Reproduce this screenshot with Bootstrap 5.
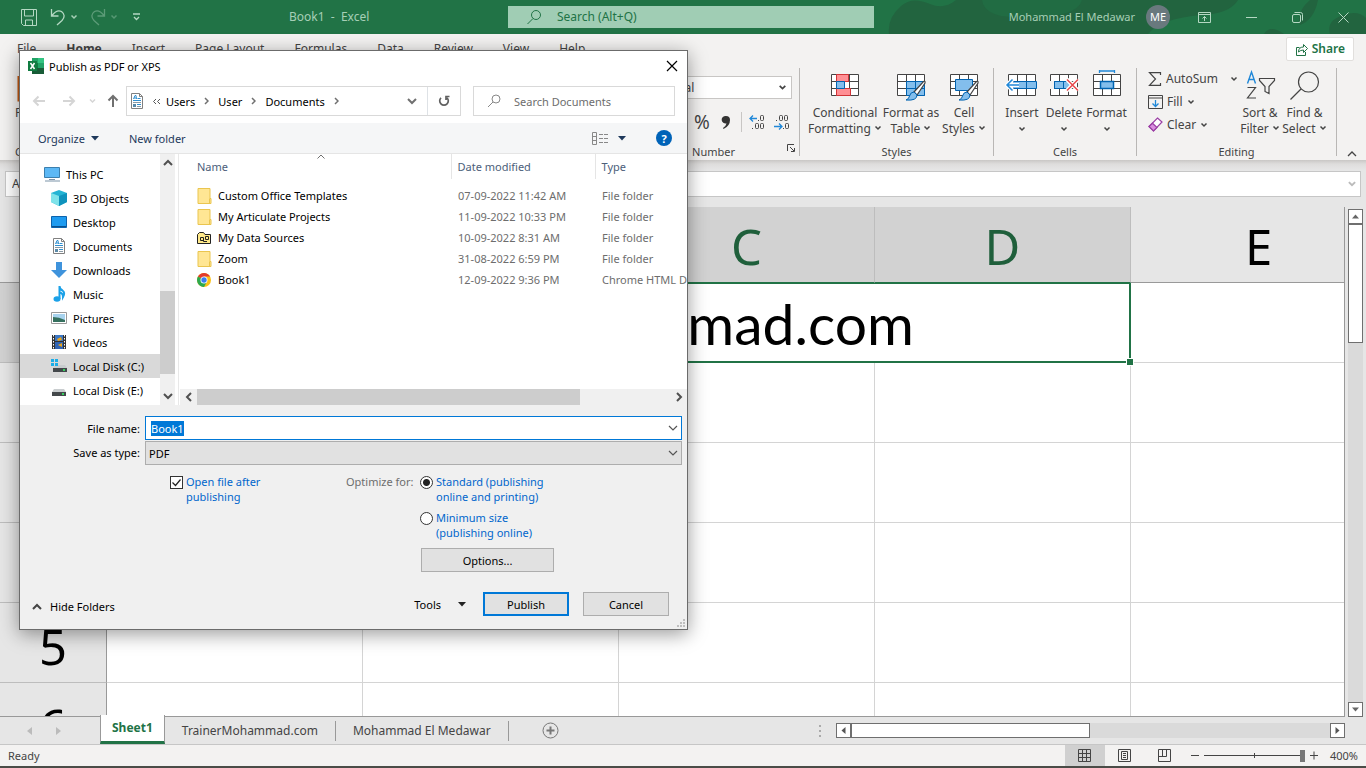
<!DOCTYPE html>
<html lang="en">
<head>
<meta charset="utf-8">
<meta name="viewport" content="width=device-width, initial-scale=1">
<title>Book1 - Excel</title>
<link href="https://cdn.jsdelivr.net/npm/bootstrap@5.3.0/dist/css/bootstrap.min.css" rel="stylesheet">
<style>
:root { --xl: #217346; --ink: #444; --line: #d4d4d4; }
body { font-family: "Noto Sans", "Open Sans", sans-serif; font-size: 12px; line-height: 16px; color: var(--ink); background: #e6e6e6; overflow: hidden; }
svg { display: block; flex: none; fill: none; }
button { background: none; border: 0; padding: 0; color: inherit; font: inherit; }
input, select { font: inherit; color: inherit; }
a { color: inherit; text-decoration: none; }
.chev { display: inline-block; vertical-align: 1px; stroke: currentColor; stroke-width: 1.5; }

/* title bar */
.titlebar { height: 34px; background: var(--xl); color: #a6cfb6; }
.titlebar .deco { right: 0; top: 0; }
.qat { width: 289px; padding-left: 20px; }
.tell { width: 366px; height: 22px; background: #a0cdb4; color: #217346; }
.tell input { background: none; border: 0; outline: 0; padding: 0; width: 240px; }
.tell input::placeholder, .seek input::placeholder { color: inherit; opacity: 1; }
.who { font-size: 11px; }
.face { width: 24px; height: 24px; background: #69797e; color: #fff; font-size: 11px; }

/* ribbon */
.ribbon { background: #f3f2f1; }
.tabrow { height: 32px; padding: 0 12px 0 17px; }
.tabrow nav { gap: 30px; padding-top: 7px; }
.share { height: 24px; background: #fff; border: 1px solid #e1dfdd; border-radius: 2px; color: var(--xl); font-weight: 600; padding: 0 8px; }
.groups { height: 94px; }
.group { border-right: 1px solid #b9b7b5; margin: 2px 0 4px; position: relative; }
.group-name { text-align: center; font-size: 11px; }
.tools { height: 72px; padding-top: 2px; }
.big { display: flex; flex-direction: column; align-items: center; line-height: 16px; white-space: nowrap; }
.big svg.pic { height: 35px; width: 34px; }
.small-tool { height: 23px; gap: 4px; }
.numfmt { height: 23px; background: #fff; border: 1px solid #c8c6c4; width: 146px; padding: 0 4px 0 3px; margin: 6px 0 0 18px; }
.numfmt select, .typebox select { appearance: none; background: none; border: 0; outline: 0; padding: 0; flex: 1; }
.formula { height: 47px; padding: 11px 5px; background: linear-gradient(#c9c7c5, #dedddc 4px, #e6e6e6 10px); }
.fbox { height: 26px; border: 1px solid #c6c6c6; background: #fff; display: flex; align-items: center; }
.fbox input { border: 0; outline: 0; background: none; width: 100%; padding: 0 6px; }

/* worksheet */
.sheet { min-height: 0; }
.cells { overflow: hidden; border-right: 1px solid #999; border-bottom: 1px solid #999; }
.cells table { table-layout: fixed; border-collapse: separate; border-spacing: 0; width: 1387px; background: #fff; color: #000; }
.cells th { font-size: 49px; font-weight: 400; line-height: 64px; text-align: center; background: #e6e6e6; border-right: 1px solid #999; border-bottom: 1px solid #bdbdbd; padding: 6px 0 0; }
.cells thead th { height: 76px; border-right-color: #bdbdbd; border-bottom-color: #999; padding: 2px 0 0; }
.cells th.on { background: #d2d2d2; color: #1f5f3b; }
.cells thead th.on { border-bottom-color: var(--xl); }
.cells tbody tr { height: 80px; }
.cells td { border-right: 1px solid var(--line); border-bottom: 1px solid var(--line); padding: 0; }
.cells td.picked { border: 2px solid var(--xl); border-top-width: 1px; position: relative; font-family: Lato, sans-serif; font-size: 57px; line-height: 76px; text-align: center; }
.picked i { position: absolute; right: -5px; bottom: -5px; width: 6px; height: 6px; background: var(--xl); border: 1px solid #fff; box-sizing: content-box; }
.vbar { width: 21px; padding: 2px 3px 0; }
.sb { border: 1px solid #6f6f6f; background: #fff; width: 15px; height: 15px; display: flex; align-items: center; justify-content: center; }
.track { background: #dadada; }
.sheettabs { height: 28px; border-bottom: 1px solid #c6c6c6; }
.sheettabs a { line-height: 27px; padding: 0 17px; }
.sheettabs .cur { background: #fff; color: var(--xl); font-weight: 700; border-bottom: 3px solid var(--xl); border-left: 1px solid #999; border-right: 1px solid #999; margin: -1px 0 2px; line-height: 26px; padding: 0 11px; }
.sheettabs .rule { border-right: 1px solid #999; height: 20px; }
.statusbar { height: 21px; background: #f3f2f1; font-size: 11px; }
.view { width: 40px; height: 21px; display: flex; align-items: center; justify-content: center; }
.view.cur { background: #d0d0d0; }
.desk { height: 2px; background: #4a4c47; }
.zoomer { appearance: none; width: 101px; height: 12px; background: linear-gradient(#444, #444) 50% 50% / 1px 5px no-repeat, linear-gradient(#444, #444) 0 50% / 100% 1px no-repeat; }
.zoomer::-webkit-slider-thumb { appearance: none; width: 5px; height: 12px; background: #777; }

/* dialog */
.dlg { position: absolute; left: 19px; top: 50px; width: 669px; height: 580px; background: #fff; border: 1px solid #6b6b6b; color: #000; box-shadow: 0 4px 18px rgba(0,0,0,.4); font-size: 11px; line-height: 15px; }
.dlg-title { height: 30px; padding: 0 9px 0 8px; }
.addr { padding: 5px 12px 7px 12px; height: 42px; }
.addr .box, .seek { height: 30px; border: 1px solid #d9d9d9; }
.seek { width: 202px; color: #6d6d6d; margin-left: 12px; padding-left: 13px; gap: 12px; }
.seek input { border: 0; outline: 0; padding: 0; width: 140px; }
.cmds { height: 31px; background: #f5f6f7; border-bottom: 1px solid #e5e5e5; color: #1e395b; padding: 0 15px 0 18px; }
.panes { height: 251px; }
.tree { width: 140px; flex: none; padding-top: 8px; overflow: hidden; margin: 0; }
.tree li { height: 24px; gap: 5px; padding-left: 31px; display: flex; align-items: center; white-space: nowrap; }
.tree li:first-child { padding-left: 24px; }
.tree li.on { background: #d9d9d9; }
.bar { background: #f0f0f0; color: #505050; }
.bar .thumb { background: #cdcdcd; }
.files { min-width: 0; border-left: 1px solid #e8e8e8; margin-left: 3px; overflow: hidden; }
.files table { table-layout: fixed; width: 560px; }
.files th { font-weight: 400; color: #4c607a; height: 25px; padding: 0 0 0 6px; }
.files th + th { border-left: 1px solid #e5e5e5; }
.files td { height: 21px; padding: 0 0 0 7px; color: #6d6d6d; white-space: nowrap; }
.files td:first-child { padding-left: 17px; color: #000; }
.files .nm { display: flex; align-items: center; gap: 4px; }
.lower { background: #f0f0f0; height: 224px; padding: 11px 5px 0 0; }
.lower .lab { width: 120px; text-align: right; }
.namebox, .typebox { height: 24px; flex: 1; margin-left: 5px; }
.namebox { background: #fff; border: 1px solid #0078d7; padding: 0 3px 0 5px; }
.namebox input { border: 0; outline: 0; padding: 0; height: 16px; flex: 1; }
.namebox input::selection { background: #0078d7; color: #fff; }
.typebox { background: #e1e1e1; border: 1px solid #adadad; padding: 0 3px; margin-top: 1px; }
.opts { padding: 9px 0 0 150px; height: 83px; color: #0066cc; }
.opts input { appearance: none; width: 13px; height: 13px; border: 1px solid #333; background: #fff; margin: 2px 3px 0 0; flex: none; }
.opts input[type=radio] { border-radius: 50%; }
.opts input[type=radio]:checked { background: radial-gradient(circle, #222 0 3px, #fff 4px); }
.opts input[type=checkbox]:checked { background: #fff url("data:image/svg+xml,%3Csvg xmlns='http://www.w3.org/2000/svg' viewBox='0 0 11 11'%3E%3Cpath d='M1.5 5.5l3 3 5-6' fill='none' stroke='%23222' stroke-width='1.2'/%3E%3C/svg%3E") center / 11px; }
.wbtn { height: 24px; background: #e1e1e1; border: 1px solid #adadad; width: 86px; text-align: center; }
.wbtn.main { border: 2px solid #0078d7; }
.grip { position: absolute; right: 1px; bottom: 1px; }
</style>
</head>
<body class="vh-100 d-flex flex-column">

<svg width="0" height="0" class="position-absolute">
  <symbol id="chev" viewBox="0 0 8 8"><path d="M1.500 2.500L4 5l2.500-2.500"/></symbol>
  <symbol id="doc" viewBox="0 0 16 16"><path d="M2.500.5h8l3 3v12h-11z" fill="#fff" stroke="#808080"/><path d="M10.500.5v3h3" stroke="#808080"/><path d="M4.500 6l1.500-3.500h1L7.500 6M5 5h2M8.500 5.500h3M4 7.500h8M8 11.500h4" stroke="#2f8fd0"/><path d="M4 9.500h8M8 13.500h4" stroke="#8a9aa5"/><path d="M4 11h3v3H4z" fill="#5b8aa8"/></symbol>
  <symbol id="folder" viewBox="0 0 16 16"><path d="M2 .5h12v10h1v5H2z" fill="#ffe694" stroke="#eac54f"/><path d="M13.500 10.500v5" stroke="#eac54f"/></symbol>
  <symbol id="disk" viewBox="0 0 16 16"><path d="M3 7h10l2 3H1z" fill="#c9cdcf"/><path d="M1 10h14v4H1z" fill="#44484b"/><path d="M11 12h2" stroke="#3f6" stroke-width="1.500"/></symbol>
  <symbol id="tgrid" viewBox="0 0 34 35"><path d="M3.500 4.500h27v21h-27zM3 11.500h28M3 18.500h28M12.500 4v22M21.500 4v22" fill="#fff" stroke="#444"/></symbol>
  <symbol id="brush" viewBox="0 0 20 22"><path d="M8 12L17.500 1.500q2-1 1.500 1.500l-8 12z" fill="#fff" stroke="#444" stroke-width="1.200"/><path d="M8 12l3 3q0 6-11 5 3-1 3.500-4 1-4 4.500-4z" fill="#83beec" stroke="#0063b1"/></symbol>
</svg>

<header class="titlebar position-relative d-flex align-items-center flex-shrink-0">
  <svg class="deco position-absolute" width="480" height="34"><path d="M3 34q-2-16 12-28Q26-4 44 4q14 6 26-4h282q-8 14-38 15-40 4-52 19zM424 0q-14 12-10 25 14-5 18-25zM444 34q-4-14 14-19 14-5 22 3v16zM378 34q6-10 20 0z" fill="#22643f"/><path d="M96 0h100q-5 20-72 17Q98 15 96 0z" fill="#216c43"/></svg>
  <div class="qat d-flex align-items-center position-relative">
    <button aria-label="Save"><svg width="17" height="17" stroke="#b5d8c3"><path d="M1.500.5h15v16h-13l-2-2zM4.500 1v6h9V1M5.500 16v-5h7v5"/></svg></button>
    <button class="d-flex align-items-center" style="margin-left:13px" aria-label="Undo"><svg width="16" height="18" stroke="#b5d8c3" stroke-width="1.300"><path d="M1.500 1v7h7M2 7.500Q7 1 11.500 3.500q5 4 .5 9L7 17"/></svg><svg class="chev ms-1" width="8" height="8"><use href="#chev"/></svg></button>
    <button class="d-flex align-items-center" style="margin-left:12px;opacity:.4" aria-label="Redo"><svg width="16" height="18" stroke="#b5d8c3" stroke-width="1.300"><path d="M14.500 1v7h-7M14 7.500Q9 1 4.500 3.500q-5 4-.5 9L9 17"/></svg><svg class="chev ms-1" width="8" height="8"><use href="#chev"/></svg></button>
    <button style="margin-left:14px" aria-label="Customize"><svg width="9" height="8" stroke="#b5d8c3" stroke-width="1.300"><path d="M1 1h7M2 4l2.500 2.500L7 4"/></svg></button>
  </div>
  <div class="flex-grow-1">Book1&nbsp; -&nbsp; Excel</div>
  <label class="tell d-flex align-items-center position-absolute start-0" style="margin-left:508px"><svg width="16" height="16" stroke="#217346" style="margin:0 15px 0 18px"><circle cx="10" cy="6" r="4.500"/><path d="M7 9.500L1.500 15"/></svg><input placeholder="Search (Alt+Q)" aria-label="Search"></label>
  <div class="d-flex align-items-center position-relative" style="padding-right:17px">
    <span class="who">Mohammad El Medawar</span>
    <span class="face rounded-circle d-flex align-items-center justify-content-center" style="margin:0 28px 0 11px">ME</span>
    <button aria-label="Ribbon display"><svg width="13" height="11" stroke="#b5d8c3"><path d="M.5.5h12v10H.5zM.5 2.500h12M6.500 9V4.500M4.500 6.500l2-2 2 2"/></svg></button>
    <button style="margin-left:35px" aria-label="Minimize"><svg width="11" height="11" stroke="#b5d8c3"><path d="M0 5.500h11"/></svg></button>
    <button style="margin-left:35px" aria-label="Restore"><svg width="11" height="11" stroke="#b5d8c3"><rect x=".5" y="2.500" width="8" height="8" rx="1.500"/><path d="M2.500.5h6q2 0 2 2v6"/></svg></button>
    <button style="margin-left:35px" aria-label="Close"><svg width="11" height="11" stroke="#b5d8c3"><path d="M.5.5l10 10m0-10l-10 10"/></svg></button>
  </div>
</header>

<section class="ribbon flex-shrink-0">
  <div class="tabrow d-flex justify-content-between align-items-start">
    <nav class="d-flex"><a href="#">File</a><a href="#" class="fw-bold">Home</a><a href="#">Insert</a><a href="#">Page Layout</a><a href="#">Formulas</a><a href="#">Data</a><a href="#">Review</a><a href="#">View</a><a href="#">Help</a></nav>
    <button class="share d-flex align-items-center gap-1" style="margin-top:3px"><svg width="13" height="13" stroke="#217346"><path d="M4.500 4.500h-3v8h9V9M3.500 9q0-5 5-5V1.500l4 4-4 4V7q-3 0-5 2z"/></svg>Share</button>
  </div>
  <div class="groups d-flex">
    <div style="width:110px;padding:10px 0 0 15px">
      <svg width="32" height="26"><path d="M3.500.5h20v24h-20z" fill="#f0a04b" stroke="#c55a11" stroke-width="2"/></svg>
      <div style="padding-top:3px">Paste</div><div class="group-name text-start" style="padding-top:23px">Clipboard</div>
    </div>
    <div class="group ms-auto" style="width:172px">
      <div class="tools">
        <label class="numfmt d-flex align-items-center"><select aria-label="Number format"><option>General</option></select><svg class="chev" width="9" height="9"><use href="#chev"/></svg></label>
        <div class="d-flex align-items-center" style="padding:7px 9px 0 66px;height:39px">
          <button style="font-size:19px" aria-label="Percent">%</button>
          <svg width="10" height="15" style="margin:0 10px 0 11px"><path d="M5 1a4 3.800 0 1 0 .5 7.500Q5 11 2 13l.5 1Q9 11 9 5 9 1 5 1z" fill="#333"/></svg>
          <span style="border-left:1px solid #c8c6c4;height:20px;margin-right:7px"></span>
          <svg width="17" height="16"><g stroke="#444"><rect x="11.500" y="1.500" width="3" height="5" rx="1"/><rect x="6.500" y="9.500" width="3" height="5" rx="1"/><rect x="11.500" y="9.500" width="3" height="5" rx="1"/><path d="M3.500 14v1M9.500 6v1"/></g><path d="M8 4.500H1M4 1.500l-3 3 3 3" stroke="#2088d8" stroke-width="1.300"/></svg>
          <svg width="17" height="16" style="margin-left:7px"><g stroke="#444"><rect x="6.500" y="1.500" width="3" height="5" rx="1"/><rect x="11.500" y="1.500" width="3" height="5" rx="1"/><rect x="12.500" y="9.500" width="3" height="5" rx="1"/><path d="M3.500 6v1M10.500 14v1"/></g><path d="M1 12.500h8M6 9.500l3 3-3 3" stroke="#2088d8" stroke-width="1.300"/></svg>
        </div>
      </div>
      <div class="group-name pt-1">Number</div>
      <svg class="position-absolute end-0 bottom-0 mb-1 me-1" width="8" height="8" stroke="#444"><path d="M.5 7V.5H7M3 3l4 4M7.500 4v3.500H4"/></svg>
    </div>
    <div class="group" style="width:194px">
      <div class="tools d-flex" style="padding-left:7px">
        <button class="big" style="width:76px"><svg class="pic" viewBox="0 0 34 35"><use href="#tgrid"/><path d="M8.500 4.500h12v7h-12zM8.500 18.500h14v7h-14z" fill="#ff8f94" stroke="#d13438"/><path d="M8.500 11.500h8v7h-8z" fill="#83beec" stroke="#0063b1"/></svg>Conditional<span>Formatting <svg class="chev" width="8" height="8"><use href="#chev"/></svg></span></button>
        <button class="big" style="width:56px"><svg class="pic" viewBox="0 0 34 35"><use href="#tgrid"/><path d="M12.500 11.500h18v14h-18z" fill="#83beec" stroke="#0063b1"/><path d="M12 18.500h19M21.500 11v15" stroke="#0063b1"/><use href="#brush" x="12" y="10" width="20" height="22"/></svg>Format as<span>Table <svg class="chev" width="8" height="8"><use href="#chev"/></svg></span></button>
        <button class="big" style="width:50px"><svg class="pic" viewBox="0 0 34 35"><use href="#tgrid"/><path d="M8.500 9.500h17v11h-17z" fill="#83beec" stroke="#0063b1"/><use href="#brush" x="12" y="10" width="20" height="22"/></svg>Cell<span>Styles <svg class="chev" width="8" height="8"><use href="#chev"/></svg></span></button>
      </div>
      <div class="group-name pt-1">Styles</div>
    </div>
    <div class="group" style="width:143px">
      <div class="tools d-flex" style="padding-left:7px">
        <button class="big" style="width:42px"><svg class="pic" viewBox="0 0 34 35"><use href="#tgrid"/><path d="M8 11.500h23.500v7H8M21.500 11v8" fill="#83beec" stroke="#0063b1"/><path d="M14 15H2M7.500 9.500L2 15l5.500 5.500" stroke="#fff" stroke-width="4"/><path d="M14 15H2M7.500 9.500L2 15l5.500 5.500" stroke="#2088d8" stroke-width="1.500"/></svg>Insert<svg class="chev mt-1" width="8" height="8"><use href="#chev"/></svg></button>
        <button class="big" style="width:42px"><svg class="pic" viewBox="0 0 34 35"><use href="#tgrid"/><path d="M2 11h5v8H2z" fill="#f3f2f1"/><path d="M7.500 11.500h9v7h-9zM16.500 11.500H22l4 3.500-4 3.500h-5.500z" fill="#83beec" stroke="#0063b1"/><path d="M20 9.500L31 20.500M31 9.500L20 20.500" stroke="#fff" stroke-width="4"/><path d="M20 9.500L31 20.500M31 9.500L20 20.500" stroke="#e8484c" stroke-width="1.500"/></svg>Delete<svg class="chev mt-1" width="8" height="8"><use href="#chev"/></svg></button>
        <button class="big" style="width:43px"><svg class="pic" viewBox="0 0 34 35"><use href="#tgrid"/><path d="M10.500 11.500h13v7h-13z" fill="#83beec" stroke="#0063b1" stroke-width="1.500"/><path d="M9.500 1h15M9.500-1v4M24.500-1v4" stroke="#2088d8" stroke-width="1.300"/></svg>Format<svg class="chev mt-1" width="8" height="8"><use href="#chev"/></svg></button>
      </div>
      <div class="group-name pt-1">Cells</div>
    </div>
    <div class="group" style="width:200px">
      <div class="tools d-flex" style="padding-left:11px">
        <div style="width:90px;margin-top:-3px">
          <button class="small-tool d-flex align-items-center w-100"><svg width="14" height="14" stroke="#444" stroke-width="1.200"><path d="M12.500 3V.6H1.500L7.500 7l-6 6.400h11V11"/></svg>AutoSum<svg class="chev ms-auto" width="8" height="8"><use href="#chev"/></svg></button>
          <button class="small-tool d-flex align-items-center"><svg width="15" height="14" stroke="#444"><path d="M.5.5h14v13H.5zM0 3h15" /><path d="M7.500 5v6.500M4.500 8.500l3 3 3-3" stroke="#2088d8" stroke-width="1.300"/></svg>Fill<svg class="chev" width="8" height="8"><use href="#chev"/></svg></button>
          <button class="small-tool d-flex align-items-center"><svg width="15" height="15" stroke="#9b3fa5" stroke-width="1.200"><path d="M9.500 1l4.500 4-8.500 9L1 9.500z" fill="#fff"/><path d="M4.500 6.200L9 10.500 5.500 14 1 9.500z" fill="#d98fdf"/></svg>Clear<svg class="chev" width="8" height="8"><use href="#chev"/></svg></button>
        </div>
        <button class="big" style="width:44px"><svg class="pic" viewBox="0 0 34 35"><path d="M4.500 13.500L8.500 2l4 11.500M6 9.500h5" stroke="#2088d8" stroke-width="1.400"/><path d="M4.500 17.500h8L4.500 28H13M16.500 8.500h15v2l-5.500 6v7l-4-2v-5l-5.500-6z" stroke="#444" stroke-width="1.200"/></svg>Sort &amp;<span>Filter <svg class="chev" width="8" height="8"><use href="#chev"/></svg></span></button>
        <button class="big" style="width:45px"><svg class="pic" viewBox="0 0 34 35" stroke="#444" stroke-width="1.200"><circle cx="20.500" cy="12" r="10"/><path d="M13 19L2.500 29.500"/></svg>Find &amp;<span>Select <svg class="chev" width="8" height="8"><use href="#chev"/></svg></span></button>
      </div>
      <div class="group-name pt-1">Editing</div>
    </div>
    <button class="d-flex align-items-end justify-content-center" style="width:29px;padding-bottom:2px" aria-label="Collapse ribbon"><svg width="10" height="8" stroke="#444" stroke-width="1.300"><path d="M1 6l4-4 4 4"/></svg></button>
  </div>
</section>

<div class="formula d-flex flex-shrink-0">
  <div class="fbox" style="width:110px"><input value="A1" aria-label="Name box"></div>
  <div class="fbox flex-grow-1" style="margin-left:90px;padding-right:3px"><input aria-label="Formula bar"><svg class="chev" width="10" height="10" style="color:#bbb"><use href="#chev"/></svg></div>
</div>

<main class="sheet d-flex flex-grow-1">
  <div class="cells flex-grow-1">
    <table>
      <colgroup><col style="width:107px"><col><col><col><col><col></colgroup>
      <thead><tr><th></th><th class="on"></th><th class="on"></th><th class="on">C</th><th class="on">D</th><th>E</th></tr></thead>
      <tbody>
        <tr><th class="on"></th><td class="picked" colspan="4">TrainerMohammad.com<i></i></td><td></td></tr>
        <tr><th></th><td></td><td></td><td></td><td></td><td></td></tr>
        <tr><th></th><td></td><td></td><td></td><td></td><td></td></tr>
        <tr><th></th><td></td><td></td><td></td><td></td><td></td></tr>
        <tr><th>5</th><td></td><td></td><td></td><td></td><td></td></tr>
        <tr><th>6</th><td></td><td></td><td></td><td></td><td></td></tr>
      </tbody>
    </table>
  </div>
  <div class="vbar d-flex flex-column">
    <button class="sb" aria-label="Up"><svg width="7" height="5"><path d="M0 4.500L3.500.5 7 4.500z" fill="#666"/></svg></button>
    <div class="track flex-grow-1"><div class="sb" style="height:119px"></div></div>
    <button class="sb" aria-label="Down"><svg width="7" height="5"><path d="M0 .5h7l-3.500 4z" fill="#666"/></svg></button>
  </div>
</main>

<div class="sheettabs d-flex align-items-center flex-shrink-0">
  <div class="d-flex" style="width:100px;padding-left:27px;gap:24px"><svg width="5" height="8"><path d="M5 0v8L0 4z" fill="#bbb"/></svg><svg width="5" height="8"><path d="M0 0v8l5-4z" fill="#bbb"/></svg></div>
  <a href="#" class="cur">Sheet1</a><a href="#">TrainerMohammad.com</a><span class="rule"></span><a href="#">Mohammad El Medawar</a><span class="rule"></span>
  <button style="margin-left:33px" aria-label="New sheet"><svg width="17" height="17" stroke="#777"><circle cx="8.500" cy="8.500" r="7.500"/><path d="M8.500 4.500v8M4.500 8.500h8" stroke-width="2"/></svg></button>
  <svg class="ms-auto" width="2" height="12"><path d="M0 0h2v2H0zM0 5h2v2H0zM0 10h2v2H0z" fill="#aaa"/></svg>
  <div class="d-flex track" style="margin:0 21px 0 15px;width:509px"><button class="sb" aria-label="Left"><svg width="5" height="7"><path d="M4.500 0v7L.5 3.500z" fill="#555"/></svg></button><div class="sb me-auto" style="width:239px"></div><button class="sb" aria-label="Right"><svg width="5" height="7"><path d="M.5 0v7l4-3.500z" fill="#555"/></svg></button></div>
</div>
<footer class="statusbar d-flex align-items-center flex-shrink-0">
  <span style="padding-left:8px">Ready</span>
  <button class="view cur ms-auto" aria-label="Normal"><svg width="13" height="13" stroke="#444"><path d="M.5.5h12v12H.5zM.5 4.500h12M.5 8.500h12M4.500.5v12M8.500.5v12"/></svg></button>
  <button class="view" aria-label="Page layout"><svg width="13" height="13" stroke="#444"><path d="M.5.5h12v12H.5zM3.500 2.500h6v8h-6zM5 4.500h3M5 6.500h3M5 8.500h3"/></svg></button>
  <button class="view" aria-label="Page break"><svg width="13" height="13" stroke="#444"><path d="M.5.5h12v12H.5zM.5 7.500h8v-7M4.500.5v7"/></svg></button>
  <button style="margin:0 5px 0 6px" aria-label="Zoom out"><svg width="8" height="9" stroke="#444"><path d="M0 4.500h8"/></svg></button>
  <input class="zoomer" type="range" min="10" max="400" value="400" aria-label="Zoom">
  <button style="margin:0 12px 0 5px" aria-label="Zoom in"><svg width="8" height="9" stroke="#444"><path d="M0 4.500h8M4 .5v8"/></svg></button>
  <span style="padding-right:8px">400%</span>
</footer>
<div class="desk flex-shrink-0"></div>

<form class="dlg d-flex flex-column" role="dialog" aria-label="Publish as PDF or XPS" onsubmit="return false">
  <div class="dlg-title d-flex align-items-center">
    <svg width="16" height="16"><path d="M4 0h12v16H4z" fill="#21a366"/><path d="M10 0h6v5h-6z" fill="#33c481"/><path d="M4 5h6v5H4z" fill="#107c41"/><path d="M4 10h12v6H4z" fill="#185c37"/><path d="M0 3h9v10H0z" fill="#107c41"/><path d="M2.500 5l4 6M6.500 5l-4 6" stroke="#fff" stroke-width="1.500"/></svg>
    <span style="margin-left:5px">Publish as PDF or XPS</span>
    <button type="button" class="ms-auto" aria-label="Close"><svg width="12" height="12" stroke="#000" stroke-width="1.200"><path d="M1 1l10 10M11 1L1 11"/></svg></button>
  </div>
  <div class="addr d-flex align-items-center">
    <svg width="94" height="14" stroke="#d5d5d5" stroke-width="2"><path d="M13 7H2M6.500 2.500L2 7l4.500 4.500M31 7h11M37.500 2.500L42 7l-4.500 4.500"/><path d="M58 5.500l2.500 2.500L63 5.500" stroke-width="1.500"/><path d="M81 13V2M76.500 6.500L81 2l4.500 4.500" stroke="#707070"/></svg>
    <div class="box d-flex align-items-center flex-grow-1">
      <svg width="16" height="16" style="margin:0 7px 0 2px"><use href="#doc"/></svg>
      <svg width="9" height="7" stroke="#555"><path d="M4 1L1.500 3.500 4 6M8 1L5.500 3.500 8 6"/></svg>
      <a href="#" style="margin:0 9px 0 5px">Users</a><svg width="5" height="8" stroke="#707070" stroke-width="1.500"><path d="M1 1l3 3-3 3"/></svg>
      <a href="#" style="margin:0 9px 0 9px">User</a><svg width="5" height="8" stroke="#707070" stroke-width="1.500"><path d="M1 1l3 3-3 3"/></svg>
      <a href="#" style="margin:0 9px 0 9px">Documents</a><svg width="5" height="8" stroke="#707070" stroke-width="1.500"><path d="M1 1l3 3-3 3"/></svg>
      <svg class="ms-auto" width="10" height="8" stroke="#707070" stroke-width="2" style="margin-right:10px"><path d="M1 2l4 4 4-4"/></svg>
      <button type="button" class="h-100 d-flex align-items-center justify-content-center border-start" style="width:33px" aria-label="Refresh"><svg width="12" height="12" stroke="#606060" stroke-width="1.700"><path d="M3 2.800A4.300 4.300 0 1 0 9 2.800M8 5V1.500h3.500"/></svg></button>
    </div>
    <label class="seek d-flex align-items-center"><svg width="15" height="14" stroke="#888"><circle cx="9" cy="5" r="4"/><path d="M6 8L1 13"/></svg><input placeholder="Search Documents" aria-label="Search Documents"></label>
  </div>
  <div class="cmds d-flex align-items-center">
    <button type="button" class="d-flex align-items-center">Organize<svg width="8" height="5" style="margin-left:6px"><path d="M0 0h8L4 4.500z" fill="#1e395b"/></svg></button>
    <button type="button" style="margin-left:30px">New folder</button>
    <button type="button" class="ms-auto d-flex align-items-center" aria-label="View"><svg width="17" height="13"><path d="M.5.5h4v12h-4zM.5 4.500h4M.5 8.500h4M7 2.500h4M12 2.500h4M7 6.500h4M12 6.500h4M7 10.500h4M12 10.500h4" stroke="#888"/></svg><svg width="8" height="5" style="margin-left:9px"><path d="M0 0h8L4 4.500z" fill="#1e395b"/></svg></button>
    <button type="button" class="rounded-circle text-white fw-bold" style="width:16px;height:16px;background:#0063b8;margin-left:30px">?</button>
  </div>
  <div class="panes d-flex">
    <ul class="tree list-unstyled">
      <li><svg width="17" height="16"><path d="M.5 1.500h15v10H.5z" fill="#5cb8f5" stroke="#3b7fae"/><path d="M1 15h15M5 13.500h6" stroke="#7b93a8"/></svg>This PC</li>
      <li><svg width="17" height="16"><path d="M8 0l8 3v9l-8 4-8-4V3z" fill="#24b4d4"/><path d="M0 3l8 3v10l-8-4z" fill="#7fe3ea"/><path d="M8 6l8-3v9l-8 4z" fill="#0f93bd"/></svg>3D Objects</li>
      <li><svg width="17" height="16"><path d="M.5 2.500h15v11H.5z" fill="#1e9bf0" stroke="#0c63ad"/><path d="M1 12.500h14" stroke="#0a4f8c"/></svg>Desktop</li>
      <li><svg width="17" height="16"><use href="#doc" width="16" height="16"/></svg>Documents</li>
      <li><svg width="17" height="16"><path d="M5 0h6v8h5l-8 8-8-8h5z" fill="#3f93dc"/></svg>Downloads</li>
      <li><svg width="17" height="16"><ellipse cx="6" cy="13" rx="3.500" ry="2.800" fill="#1ba1e8"/><path d="M8.500 13V0q0 3 3 4.500 3 2 .5 6.500 0-4-3.500-4.500" stroke="#1ba1e8" stroke-width="2"/></svg>Music</li>
      <li><svg width="17" height="16"><path d="M.5 2.500h15v11H.5z" fill="#fff" stroke="#999"/><path d="M2 4h12v8H2z" fill="#a8d3ee"/><path d="M2 7q6 0 12 3v2H2z" fill="#35705e"/></svg>Pictures</li>
      <li><svg width="17" height="16"><path d="M1 1h14v14H1z" fill="#333"/><path d="M4 1h8v6H4z" fill="#3b77c4"/><path d="M4 8h8v7H4z" fill="#3064b4"/><path d="M6 5l4-2 1 3-4 1zM7 11l4-2v4z" fill="#e8a41e"/><path d="M2.500 1v14M13.500 1v14" stroke="#fff" stroke-dasharray="1.500 1.500"/></svg>Videos</li>
      <li class="on"><svg width="17" height="16"><use href="#disk" x="1" y="0" width="16" height="16"/><path d="M0 1h3v3H0zM4 1h3v3H4zM0 5h3v3H0zM4 5h3v3H4z" fill="#1caee8"/></svg>Local Disk (C:)</li>
      <li><svg width="17" height="16"><use href="#disk" width="16" height="16"/></svg>Local Disk (E:)</li>
    </ul>
    <div class="bar d-flex flex-column align-items-center flex-shrink-0" style="width:15px">
      <svg width="10" height="16" stroke="#505050" stroke-width="2"><path d="M1 11l4-4 4 4"/></svg>
      <div class="thumb w-100" style="height:83px;margin-top:121px"></div>
      <svg class="mt-auto" width="10" height="16" stroke="#505050" stroke-width="2"><path d="M1 5l4 4 4-4"/></svg>
    </div>
    <div class="files flex-grow-1 d-flex flex-column position-relative">
      <svg class="position-absolute top-0" style="left:138px" width="8" height="5" stroke="#707070"><path d="M.5 4.500l3.500-3.500 3.500 3.500"/></svg>
      <table>
        <colgroup><col style="width:272px"><col style="width:144px"><col></colgroup>
        <thead><tr><th style="padding-left:18px">Name</th><th>Date modified</th><th>Type</th></tr><tr style="height:6px"></tr></thead>
        <tbody>
          <tr><td><span class="nm"><svg width="18" height="16"><use href="#folder" width="16" height="16"/></svg>Custom Office Templates</span></td><td>07-09-2022 11:42 AM</td><td>File folder</td></tr>
          <tr><td><span class="nm"><svg width="18" height="16"><use href="#folder" width="16" height="16"/></svg>My Articulate Projects</span></td><td>11-09-2022 10:33 PM</td><td>File folder</td></tr>
          <tr><td><span class="nm"><svg width="18" height="16"><path d="M1.500 13.500v-9l2-2h4l1.500 2h5.500v9z" fill="#ffe98a" stroke="#222"/><path d="M4.500 7.500h3v3h-3zM9.500 6.500h3v3h-3zM7.500 9v2.500h3.500" stroke="#222"/></svg>My Data Sources</span></td><td>10-09-2022 8:31 AM</td><td>File folder</td></tr>
          <tr><td><span class="nm"><svg width="18" height="16"><use href="#folder" width="16" height="16"/></svg>Zoom</span></td><td>31-08-2022 6:59 PM</td><td>File folder</td></tr>
          <tr><td><span class="nm"><svg width="18" height="16"><circle cx="8" cy="8" r="7" fill="#fbc116"/><path d="M8 8L1.940 4.500A7 7 0 0 1 14.060 4.500L8 4.500z" fill="#e33b2e"/><path d="M8 8L1.940 4.500A7 7 0 0 0 8 15l3-5.500z" fill="#2da94f"/><circle cx="8" cy="8" r="3.500" fill="#fff"/><circle cx="8" cy="8" r="2.700" fill="#3a7ff0"/></svg>Book1</span></td><td>12-09-2022 9:36 PM</td><td>Chrome HTML Document</td></tr>
        </tbody>
      </table>
      <div class="bar mt-auto d-flex align-items-center" style="height:16px;margin-left:1px">
        <svg width="17" height="10" stroke="#505050" stroke-width="2"><path d="M11 1L7 5l4 4"/></svg>
        <div class="thumb h-100" style="width:383px"></div>
        <svg class="ms-auto" width="14" height="10" stroke="#505050" stroke-width="2"><path d="M4 1l4 4-4 4"/></svg>
      </div>
    </div>
  </div>
  <div class="lower">
    <div class="d-flex align-items-center"><label class="lab" for="fname">File name:</label><div class="namebox d-flex align-items-center"><input id="fname" value="Book1"><svg width="10" height="8" stroke="#555" stroke-width="1.200"><path d="M1 2l4 4 4-4"/></svg></div></div>
    <div class="d-flex align-items-center"><label class="lab" for="ftype">Save as type:</label><div class="typebox d-flex align-items-center"><select id="ftype"><option>PDF</option></select><svg width="10" height="8" stroke="#555" stroke-width="1.200"><path d="M1 2l4 4 4-4"/></svg></div></div>
    <div class="opts d-flex">
      <label class="d-flex align-items-start" style="width:176px"><input type="checkbox" checked><span>Open file after<br>publishing</span></label>
      <span style="color:#6d6d6d;width:74px">Optimize for:</span>
      <div><label class="d-flex align-items-start"><input type="radio" name="opt" checked><span>Standard (publishing<br>online and printing)</span></label>
      <label class="d-flex align-items-start" style="margin-top:6px"><input type="radio" name="opt"><span>Minimum size<br>(publishing online)</span></label></div>
    </div>
    <button type="button" class="wbtn d-block" style="width:133px;margin-left:401px">Options...</button>
    <div class="d-flex align-items-center" style="padding:20px 13px 0 12px">
      <button type="button" class="d-flex align-items-center" style="margin-top:5px"><svg width="10" height="8" stroke="#444" stroke-width="2"><path d="M1 6l4-4 4 4"/></svg><span style="margin-left:8px">Hide Folders</span></button>
      <button type="button" class="ms-auto d-flex align-items-center">Tools<svg width="8" height="5" style="margin:0 17px"><path d="M0 0h8L4 4.500z" fill="#222"/></svg></button>
      <button class="wbtn main">Publish</button><button type="button" class="wbtn" style="margin-left:14px">Cancel</button>
    </div>
  </div>
  <svg class="grip" width="9" height="9"><path d="M6 0h2v2H6zM3 3h2v2H3zM6 3h2v2H6zM0 6h2v2H0zM3 6h2v2H3zM6 6h2v2H6z" fill="#bfbfbf"/></svg>
</form>

<script src="https://cdn.jsdelivr.net/npm/bootstrap@5.3.0/dist/js/bootstrap.bundle.min.js"></script>
<script>document.getElementById("fname").select();</script>
</body>
</html>
